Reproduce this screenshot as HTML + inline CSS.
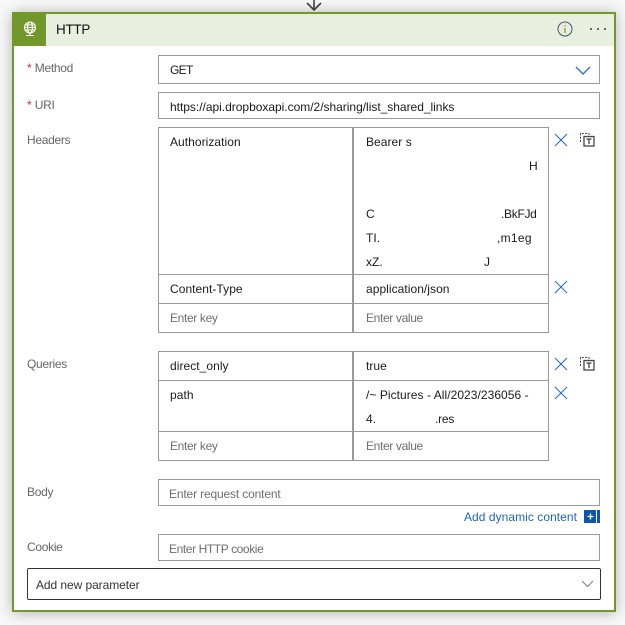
<!DOCTYPE html>
<html>
<head>
<meta charset="utf-8">
<style>
html,body{margin:0;padding:0;width:625px;height:625px;overflow:hidden;background:#f8f8f8}
body{position:relative;font-family:"Liberation Sans",sans-serif;font-size:12px;color:#1a1a1a}
#card{position:absolute;left:12px;top:12px;width:600px;height:596px;border:2px solid #72982b;background:#fff;box-shadow:0 1px 14px rgba(0,0,0,.28)}
#hdr{position:absolute;left:14px;top:14px;width:600px;height:32px;background:#e9efdf}
#ico{position:absolute;left:14px;top:14px;width:32px;height:32px;background:#72982b}
.b{position:absolute;box-sizing:border-box;border:1px solid #9a9a9a;background:#fff}
.t{position:absolute;white-space:nowrap;line-height:16px;letter-spacing:.05px}
.l{color:#666;letter-spacing:-.3px}
.p{color:#6e6e6e;letter-spacing:-.35px}
.r{color:#e0245e}
.h{position:absolute;background:#9a9a9a}
svg{position:absolute;overflow:visible}
</style>
</head>
<body>
<svg style="left:304px;top:0" width="20" height="12" fill="none" stroke="#444" stroke-width="1.6"><path d="M10 0V10M3 3L10 10L17 3"/></svg>
<div id="card"></div>
<div id="hdr"></div>
<div id="ico"></div>
<svg style="left:14px;top:14px" width="32" height="32" fill="none" stroke="#fff" stroke-width="1.100"><circle cx="16" cy="13.500" r="5.500"/><ellipse cx="16" cy="13.500" rx="2.500" ry="5.500"/><path d="M10.500 13.500H21.500M11.500 11H20.500M11.500 16H20.500M16 19V21M12 21.500H20"/></svg>
<div class="t" style="left:56px;top:22px;font-size:13.500px;letter-spacing:-.3px;color:#111">HTTP</div>
<svg style="left:557px;top:21px" width="16" height="16" fill="none" stroke="#4f6472" stroke-width="1.100"><circle cx="8" cy="8" r="7"/><path d="M8 7V12" stroke="#a57b2e" stroke-width="1.200"/><path d="M8 4.200V5.500" stroke="#a57b2e" stroke-width="1.200"/></svg>
<svg style="left:590px;top:27px" width="16" height="4" fill="#666"><rect x="0" y="1" width="2" height="2"/><rect x="7" y="1" width="2" height="2"/><rect x="14" y="1" width="2" height="2"/></svg>

<div class="t" style="left:27px;top:60px"><span class="r">*</span><span class="l"> Method</span></div>
<div class="b" style="left:158px;top:55px;width:442px;height:29px"></div>
<div class="t" style="left:170px;top:62px;letter-spacing:-.7px">GET</div>
<svg style="left:575px;top:66px" width="16" height="10" fill="none" stroke="#2a73c9" stroke-width="1.400"><path d="M1 1L8 8L15 1"/></svg>

<div class="t" style="left:27px;top:97px"><span class="r">*</span><span class="l"> URI</span></div>
<div class="b" style="left:158px;top:92px;width:442px;height:27px"></div>
<div class="t" style="left:170px;top:99px;letter-spacing:-.02px">https://api.dropboxapi.com/2/sharing/list_shared_links</div>

<div class="t l" style="left:27px;top:132px">Headers</div>
<div class="b" style="left:158px;top:127px;width:391px;height:206px"></div>
<div class="h" style="left:352px;top:127px;width:2px;height:206px"></div>
<div class="h" style="left:158px;top:274px;width:391px;height:1px"></div>
<div class="h" style="left:158px;top:303px;width:391px;height:1px"></div>
<div class="t" style="left:170px;top:134px">Authorization</div>
<div class="t" style="left:366px;top:134px">Bearer s</div>
<div class="t" style="left:529px;top:158px">H</div>
<div class="t" style="left:366px;top:206px">C</div>
<div class="t" style="left:501px;top:206px;letter-spacing:-.3px">.BkFJd</div>
<div class="t" style="left:366px;top:230px">TI.</div>
<div class="t" style="left:497px;top:230px;letter-spacing:.3px">,m1eg</div>
<div class="t" style="left:366px;top:254px">xZ.</div>
<div class="t" style="left:484px;top:254px">J</div>
<div class="t" style="left:170px;top:281px">Content-Type</div>
<div class="t" style="left:366px;top:281px">application/json</div>
<div class="t p" style="left:170px;top:310px">Enter key</div>
<div class="t p" style="left:366px;top:310px">Enter value</div>

<svg style="left:554px;top:133px" width="14" height="14" fill="none" stroke="#2a6fc4" stroke-width="1.100"><path d="M1 1L13 13M13 1L1 13"/></svg>
<svg style="left:554px;top:280px" width="14" height="14" fill="none" stroke="#2a6fc4" stroke-width="1.100"><path d="M1 1L13 13M13 1L1 13"/></svg>
<svg style="left:580px;top:132px" width="16" height="16" fill="none" stroke="#444"><path d="M.5 10V1.500H9V4" stroke-dasharray="2 1.300"/><rect x="4" y="4.500" width="10" height="9.500" stroke-width="1.300"/><path d="M6.500 7H11.500M9 7V12" stroke-width="1.300"/></svg>

<div class="t l" style="left:27px;top:356px">Queries</div>
<div class="b" style="left:158px;top:351px;width:391px;height:110px"></div>
<div class="h" style="left:352px;top:351px;width:2px;height:110px"></div>
<div class="h" style="left:158px;top:380px;width:391px;height:1px"></div>
<div class="h" style="left:158px;top:431px;width:391px;height:1px"></div>
<div class="t" style="left:170px;top:358px">direct_only</div>
<div class="t" style="left:366px;top:358px">true</div>
<div class="t" style="left:170px;top:387px">path</div>
<div class="t" style="left:366px;top:387px">/~ Pictures - All/2023/236056 -</div>
<div class="t" style="left:366px;top:411px">4.</div>
<div class="t" style="left:435px;top:411px;letter-spacing:-.2px">.res</div>
<div class="t p" style="left:170px;top:438px">Enter key</div>
<div class="t p" style="left:366px;top:438px">Enter value</div>
<svg style="left:554px;top:357px" width="14" height="14" fill="none" stroke="#2a6fc4" stroke-width="1.100"><path d="M1 1L13 13M13 1L1 13"/></svg>
<svg style="left:554px;top:386px" width="14" height="14" fill="none" stroke="#2a6fc4" stroke-width="1.100"><path d="M1 1L13 13M13 1L1 13"/></svg>
<svg style="left:580px;top:356px" width="16" height="16" fill="none" stroke="#444"><path d="M.5 10V1.500H9V4" stroke-dasharray="2 1.300"/><rect x="4" y="4.500" width="10" height="9.500" stroke-width="1.300"/><path d="M6.500 7H11.500M9 7V12" stroke-width="1.300"/></svg>

<div class="t l" style="left:27px;top:484px">Body</div>
<div class="b" style="left:158px;top:479px;width:442px;height:27px"></div>
<div class="t p" style="left:169px;top:486px;letter-spacing:-.15px">Enter request content</div>
<div class="t" style="left:464px;top:509px;color:#1f66b8">Add dynamic content</div>
<div style="position:absolute;left:584px;top:510px;width:16px;height:13px;background:#0f55a8"></div>
<div style="position:absolute;left:596px;top:510px;width:1px;height:13px;background:#fff"></div>
<svg style="left:587px;top:513px" width="7" height="7" stroke="#fff" stroke-width="1.300"><path d="M3.500 .5V6.500M.5 3.500H6.500"/></svg>

<div class="t l" style="left:27px;top:539px">Cookie</div>
<div class="b" style="left:158px;top:534px;width:442px;height:27px"></div>
<div class="t p" style="left:169px;top:541px;letter-spacing:-.4px">Enter HTTP cookie</div>

<div class="b" style="left:27px;top:568px;width:574px;height:32px;border-color:#333;border-radius:2px"></div>
<div class="t" style="left:36px;top:577px;color:#333;letter-spacing:-.07px">Add new parameter</div>
<svg style="left:581px;top:580px" width="13" height="8" fill="none" stroke="#7a7a8a" stroke-width="1"><path d="M1 1L6.500 6.500L12 1"/></svg>
</body>
</html>
